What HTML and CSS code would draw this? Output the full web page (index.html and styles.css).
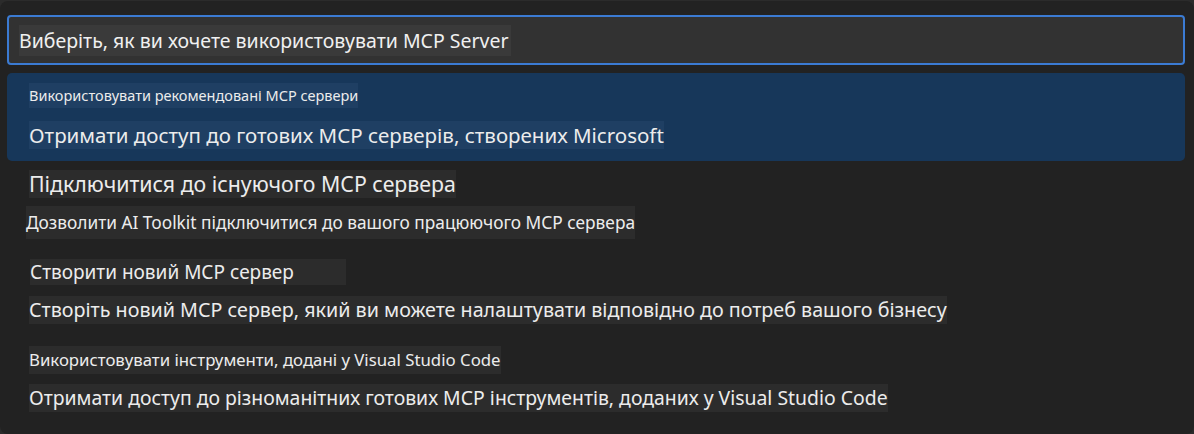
FILE: index.html
```html
<!DOCTYPE html>
<html lang="uk">
<head>
<meta charset="utf-8">
<link rel="stylesheet" href="styles.css">
</head>
<body>
<div class="panel">
  <div class="input">
    <span class="t t-input">Виберіть, як ви хочете використовувати MCP Server</span>
  </div>
  <div class="list">
    <div class="item selected">
      <span class="t t-sub1">Використовувати рекомендовані МСР сервери</span>
      <span class="t t-main1">Отримати доступ до готових МСР серверів, створених Microsoft</span>
    </div>
    <div class="item">
      <span class="t t-title2">Підключитися до існуючого МСР сервера</span>
      <span class="t t-desc2">Дозволити AI Toolkit підключитися до вашого працюючого МСР сервера</span>
    </div>
    <div class="item">
      <span class="t t-title3">Створити новий МСР сервер</span>
      <span class="t t-desc3">Створіть новий МСР сервер, який ви можете налаштувати відповідно до потреб вашого бізнесу</span>
    </div>
    <div class="item">
      <span class="t t-title4">Використовувати інструменти, додані у Visual Studio Code</span>
      <span class="t t-desc4">Отримати доступ до різноманітних готових МСР інструментів, доданих у Visual Studio Code</span>
    </div>
  </div>
</div>
</body>
</html>
```
FILE: styles.css
```css
html, body {
  margin: 0;
  padding: 0;
  background: #2b2b2b;
}
body {
  font-family: "Noto Sans", "Open Sans", sans-serif;
  color: #ececec;
}
.panel {
  box-sizing: border-box;
  width: 1194px;
  height: 433px;
  margin-top: 1px;
  background: #222222;
  border-radius: 8px;
  padding: 14px 9px 0 7px;
}
.input {
  box-sizing: border-box;
  height: 50px;
  border: 2px solid #3b7bd3;
  border-radius: 4px;
  background: #323232;
  padding: 8px 0 0 10px;
}
.t {
  display: block;
  width: fit-content;
  white-space: nowrap;
  box-sizing: border-box;
}
.t-input {
  background: #3a3a3a;
  font-size: 19.5px;
  height: 31px;
  line-height: 31px;
  padding-right: 2px;
  color: #f0f0f0;
}
.list {
  margin-top: 8px;
}
.item {
  display: flex;
  flex-direction: column;
  align-items: flex-start;
  padding-left: 22px;
}
.selected {
  background: #17375a;
  border-radius: 5px;
  height: 88px;
  box-sizing: border-box;
  padding-top: 10px;
}
.selected .t { background: #1f3f63; }
.item:not(.selected) .t { background: #2c2c2c; }
.t-sub1 {
  font-size: 14.5px;
  height: 25px;
  line-height: 25px;
}
.t-main1 {
  margin-top: 13px;
  font-size: 20.5px;
  height: 28px;
  line-height: 28px;
}
.t-title2 {
  margin-top: 9px;
  font-size: 21.3px;
  height: 28px;
  line-height: 28px;
}
.t-desc2 {
  margin-top: 8px;
  margin-left: -3px;
  font-size: 17.3px;
  height: 33px;
  line-height: 33px;
}
.t-title3 {
  margin-top: 20px;
  margin-left: 1px;
  font-size: 19px;
  height: 26px;
  line-height: 26px;
  width: 316px;
}
.t-desc3 {
  margin-top: 11px;
  font-size: 19.7px;
  height: 28px;
  line-height: 28px;
}
.t-title4 {
  margin-top: 22px;
  font-size: 16.8px;
  height: 28px;
  line-height: 28px;
}
.t-desc4 {
  margin-top: 10px;
  font-size: 19.4px;
  height: 28px;
  line-height: 28px;
}
```
